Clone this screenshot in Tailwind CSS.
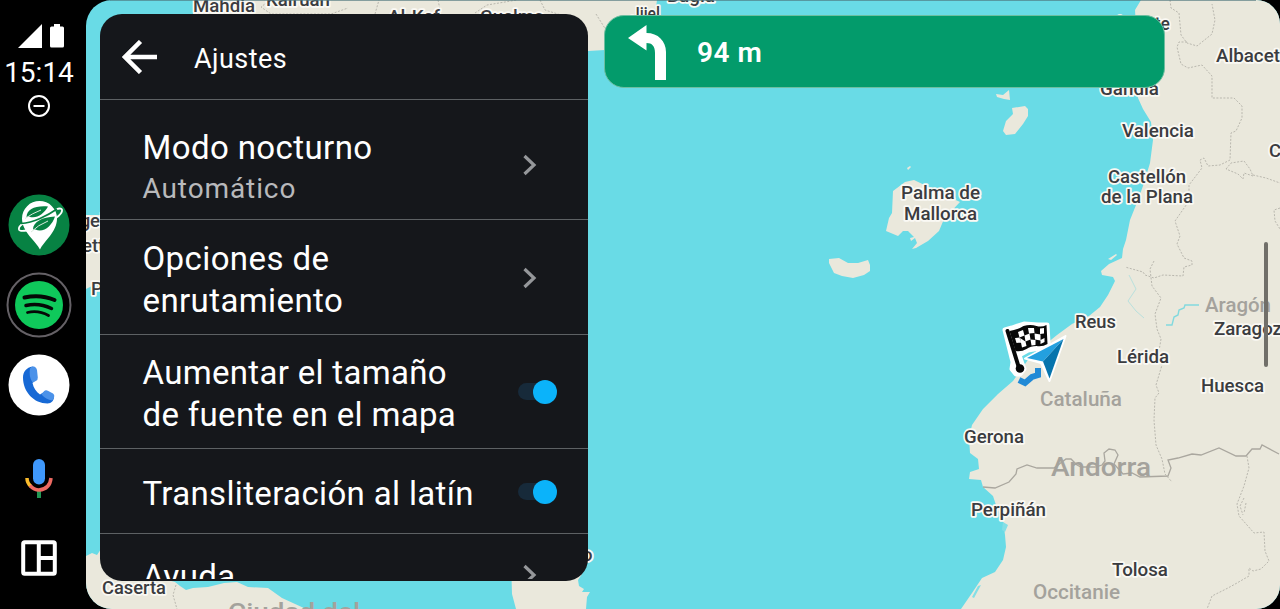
<!DOCTYPE html>
<html lang="es">
<head>
<meta charset="utf-8">
<title>Ajustes</title>
<script src="https://cdn.jsdelivr.net/npm/@tailwindcss/browser@4"></script>
</head>
<body class="bg-black">
<div class="relative flex h-[609px] w-[1280px] overflow-hidden bg-black font-['Roboto',sans-serif]">
  <!-- System rail -->
  <nav class="flex h-full w-[86px] shrink-0 flex-col items-center pr-2 text-white">
    <div class="mt-6 flex h-6 items-end gap-2 pl-1">
      <svg class="h-6 w-6" viewBox="0 0 24 24" fill="white"><path d="M24 0V24H0Z"/></svg>
      <svg class="h-6 w-[14px]" viewBox="0 0 14 24" fill="white"><path d="M4 0h6v2.500h2.500q1.500 0 1.500 1.500v18q0 1.500-1.500 1.500h-11Q0 23.500 0 22V4q0-1.500 1.500-1.500H4Z"/></svg>
    </div>
    <div class="mt-[9px] h-8 text-[28px] leading-8 whitespace-nowrap">15:14</div>
    <svg class="mt-[6px] size-[22px]" viewBox="0 0 22 22" fill="none" stroke="white" stroke-width="2"><circle cx="11" cy="11" r="10"/><path d="M5.500 11h11"/></svg>
    <svg class="mt-[77px] size-[62px]" viewBox="0 0 62 62">
      <circle cx="31" cy="31" r="30.500" fill="#078243"/>
      <path d="M32 55.500C28 47 14 38 14 24.500a17.500 17.500 0 0 1 35 0C49 38 36 47 32 55.500Z" fill="#fff"/>
      <path d="M48 15.500c4-1.700 6.500-1.200 6 1.500-.8 4-9 9.500-20 14.500S12 38.500 11 35.500c-.6-2 1-4 4-6" fill="none" stroke="#fff" stroke-width="1.800"/>
      <path d="M13 29.500Q22 29 32 24.500T49 15" fill="none" stroke="#078243" stroke-width="1.600"/>
      <path d="M18.500 23C19 15 27 11.500 40 12.500 36 20 28 25.500 21 22.500ZM25 35.500C25 28 34 23 47 22.500 44 32 35 39.500 27.500 35.500Z" fill="#078243"/>
      <path d="M17 24.500Q24 19.500 33 16M23 38Q30 31 40 27" fill="none" stroke="#d7eadc" stroke-width="1"/>
    </svg>
    <svg class="mt-4 size-[66px]" viewBox="0 0 66 66">
      <circle cx="33" cy="33" r="31.500" fill="none" stroke="#656166" stroke-width="2"/>
      <circle cx="33" cy="33" r="24" fill="#0fc95b"/>
      <g fill="none" stroke="#050806" stroke-linecap="round"><path d="M18.500 25.500q16-3.500 30 2.500" stroke-width="4"/><path d="M20 33.500q13-3 25.500 3" stroke-width="3.500"/><path d="M21.500 40.500q11-2.500 21 3" stroke-width="2.800"/></g>
    </svg>
    <svg class="mt-[16px] size-[62px]" viewBox="0 0 62 62">
      <circle cx="31" cy="31" r="30.500" fill="#fff"/>
      <path d="M24.500 12.500c-6 1-9.500 5.500-9.500 11C15 38 26 49.500 39.500 49.500c4 0 6.500-3 6.500-7l-8.500-5.500-5.500 3.500c-4-3-6.500-6.500-7.500-11.500l4.500-4-2-11.500Z" fill="#1769d5"/>
      <path d="M22 14.500q1-2 3.500-2t3.500 3.500l.8 7.500q.2 2.500-2 3.500l-3.300 1.500q-4-6-2.500-14ZM33.500 40.500l2.300-3q1.700-1.800 4-.8l5.200 2.800q1.800 1.200 1.200 3.500-.5 2-2.200 3.500-6-1-10.500-6Z" fill="#4b92e9"/>
    </svg>
    <svg class="mt-[43px] h-[40px] w-[30px]" viewBox="0 0 30 40">
      <path d="M15 31v8" stroke="#229653" stroke-width="4"/>
      <path d="M3 19q0 5 4 8.500" fill="none" stroke="#fbbc2c" stroke-width="3.500"/>
      <path d="M6 26.500Q10 31 15 31q11-1 12-12" fill="none" stroke="#ed6a62" stroke-width="3.500"/>
      <rect x="9" y="0" width="12" height="25.500" rx="6" fill="#3f98fb"/>
    </svg>
    <svg class="mt-[41px] size-9" viewBox="0 0 36 36" fill="none" stroke="#fff" stroke-width="4"><rect x="2.200" y="2.200" width="31.600" height="31.600" rx="1.500"/><path d="M17.800 2v32M18 18h16"/></svg>
  </nav>

  <!-- Map viewport -->
  <main class="relative h-full w-[1194px] overflow-hidden rounded-l-[26px] rounded-r-[24px] bg-[#69dbe6]">
    <svg class="block h-full w-full" viewBox="86 0 1194 609">
      <g fill="#eae8dc">
        <path d="M193 0H657Q655 40 605 50L588 51V100H193Z"/>
        <path d="M86 215H120V287H103L96 284 86 289Z"/>
        <path d="M86 556 92 553 97 555 101 549V540H160V578L175 582 180 586 186 590 193 588 208 587 224 583 237 582 248 587 268 588 282 598 306 609H86Z"/>
        <path d="M511 560H583L582 574 578 580 579 586 584 589 582 592 590 592 587 597 586 609H516L512 594Z"/>
        <path d="M1141 0 1135 10 1138 60 1134 80 1138 98 1143 109 1151 122 1153 140 1150 163 1143 186 1136 205 1130 220 1126 240 1123 249 1122 258 1109 264 1101 271 1102 275 1113 277 1115 281 1108 295 1100 307 1089 316 1072 324 1057 335 1030 357 1013 381 998 394 983 409 972 425 969 438 970 453 978 459 979 469 970 472 969 479 981 480 983 487 993 496 997 508 1003 520 1005 535 1006 547 1003 560 995 572 982 578 972 593 961 609H1280V0Z"/>
        <path d="M996 94 1003 95 1009 90 1010 100 1004 99 997 97ZM1012 108 1025 106 1028 109 1028 116 1023 124 1015 134 1006 135 1003 131 1006 121 1013 114Z"/>
        <path d="M893 191 905 182 914 180 960 202 944 219 939 231 928 241 916 248 912 249 917 243 915 238 911 241 910 238 914 237 908 231 903 231 898 236 886 231 889 218 892 213Z"/>
        <path d="M829 259 839 258 848 263 858 263 868 260 870 265 870 271 864 275 853 278 842 276 834 273 829 263ZM907 168l3-2 1 1-3 3ZM1108 259l8-5 1 1-6 5ZM982 593l-8 10 1-9 6-9Z"/>
      </g>
      <path d="M1003 522l5 3-3 7-3-2ZM981 585l-7 13-2-1 6-11Z" fill="#83dfe6"/>
      <!-- Rivers -->
      <path d="M1166 325h6l2-8 4-2 1-5 5-2 1-3h14" fill="none" stroke="#82d9de" stroke-width="1.400"/>
      <path d="M1129 275l7 14-8 12 8 10 8 7" fill="none" stroke="#b9e0dc" stroke-width="1"/>
      <!-- Region borders -->
      <g fill="none" stroke="#b9b7ae" stroke-width="1" stroke-dasharray="2 1.500">
        <path d="M1170 0l1 8 8 5 2 22 6 8 10 3 15-12 3-14-3-16"/>
        <path d="M1187 42l-8 0-2 5 4 17 7 4 14-3 10 11 0 22h22l8 8v12l-6 13-5 2-1 27-10 5-12 1-4-8-4 2 2 8-13 17v16l-14 20 5 15-3 8 7 14 8 3v4l-8 2-1 9-20-1-9 3-9-3-2-3-18-5"/>
        <path d="M1154 261l-4 8 2 17 9 12-6 16 2 15 4 10-2 12 3 14-6 20 3 8-4 5-1 22 2 25 6 14 3 15 7 8"/>
        <path d="M1226 169l5-6 13-2 6 8 3 7-9-3-1 6-5-5-12-5M1253 175l13 3 14 5M1280 208l-6 2 1 11 5 8M1247 456l2 12-5 18-7 18 2 12 8 9 7 8 10-1 1 19 4 10-8 8-8 2-4-3v8l-12 7-9 5-16 8-5 13"/>
        <path d="M270 0l-9 7 10 7h60l17-6M375 14l4-14M438 0l3 14M475 13l12-8 30-5M540 0l5 10 16 5M596 14l10 16M176 585l-3 10 4 14"/>
        <path d="M1244 498l-4 8 3 9M1246 503l-2 10"/>
      </g>
      <path d="M983 487l12 1 14-6 7-8 1-5 10-4 10 3h17l12-9 5 0 6 6 4 2h14l7-2 3-4-1-8 5-4 6 1 3 5-4 9 9 10 9-1 8 4 28-1 3-8-3-8 10-2 14-4 9 1 18-7 17 8 10 0 6-7 8 0 2-4 17 9" fill="none" stroke="#aaa79f" stroke-width="1.300"/>
      <!-- Route and destination -->
      <path d="M1019 380l6 3 7-6 6-2 0-7" fill="none" stroke="#218ad6" stroke-width="6"/>
      <g stroke-linejoin="round">
        <path d="M1005 330l7-2 12-4 14 1 9 0 1 18-9 5-11 2-9 5 3 9 2 5-4 5h-4l-4-5 1-7Z" fill="#fff" stroke="#fff" stroke-width="5"/>
        <path d="M1007.500 331 1019 368" stroke="#080808" stroke-width="4" stroke-linecap="round"/><circle cx="1020" cy="368.500" r="4.300" fill="#080808"/>
        <path d="M1009.500 331q8-1 14-5 7-2 13 0 5 1.500 10-1l1 19q-5 3-11 2-6 0-10 3-5 3-11 2Z" fill="#080808"/>
        <g fill="#fff"><path d="M1018 332l5-2 1.500 5.500-5 2ZM1028 328l6 0 .5 5-5.500.5ZM1024.500 335.500l5-2 1 6-5 2ZM1034.500 333.500l6 1v6l-5.500-1ZM1020 338l5.500 3.500 1 4.500-4.500 1.500ZM1030.500 339.500l5 .5v5l-4 .5ZM1040 328.500l4-.5v5.500l-4 .5ZM1040.500 340l4-2v4l-4 2ZM1015 338l4.500-.5 1.500 5-4.500.5Z"/></g>
      </g>
      <path d="M1065.500 336 1025 358.500 1041 363 1049.500 381Z" fill="#fff" stroke="#fff" stroke-width="2" stroke-linejoin="round"/>
      <path d="M1063.500 339 1027 358 1043 361.500Z" fill="#23a0df"/><path d="M1063.500 339 1043 361.500 1049.500 378.500Z" fill="#0674ad"/>
      <!-- Place names -->
      <g class="font-medium" font-size="18.500" fill="#3b3c40" stroke="#faf9f4" stroke-width="3.600" stroke-linejoin="round" paint-order="stroke">
        <text x="193" y="12" textLength="62" lengthAdjust="spacingAndGlyphs">Mahdia</text><text x="266" y="6" textLength="64" lengthAdjust="spacingAndGlyphs">Kairuán</text><text x="388" y="23" textLength="52" lengthAdjust="spacingAndGlyphs">Al-Kef</text><text x="480" y="23" textLength="64" lengthAdjust="spacingAndGlyphs">Guelma</text><text x="631" y="20" textLength="29" lengthAdjust="spacingAndGlyphs">Jijel</text><text x="667" y="2" textLength="48" lengthAdjust="spacingAndGlyphs">Bugía</text>
        <text x="1106" y="30" textLength="64" lengthAdjust="spacingAndGlyphs">Alicante</text><text x="1100" y="95" textLength="59" lengthAdjust="spacingAndGlyphs">Gandía</text><text x="1216" y="62" textLength="74" lengthAdjust="spacingAndGlyphs">Albacete</text><text x="1122" y="137" textLength="72" lengthAdjust="spacingAndGlyphs">Valencia</text><text x="1269" y="157">Cuenca</text>
        <text x="1108" y="183" textLength="78" lengthAdjust="spacingAndGlyphs">Castellón</text><text x="1101" y="203" textLength="92" lengthAdjust="spacingAndGlyphs">de la Plana</text><text x="901" y="199" textLength="79" lengthAdjust="spacingAndGlyphs">Palma de</text><text x="904" y="219.500" textLength="73" lengthAdjust="spacingAndGlyphs">Mallorca</text>
        <text x="1075" y="328" textLength="41" lengthAdjust="spacingAndGlyphs">Reus</text><text x="1214" y="335" textLength="78" lengthAdjust="spacingAndGlyphs">Zaragoza</text><text x="1117" y="363" textLength="52" lengthAdjust="spacingAndGlyphs">Lérida</text><text x="1201" y="392" textLength="63" lengthAdjust="spacingAndGlyphs">Huesca</text><text x="964" y="443" textLength="60" lengthAdjust="spacingAndGlyphs">Gerona</text><text x="971" y="515.500" textLength="75" lengthAdjust="spacingAndGlyphs">Perpiñán</text><text x="1112" y="575.500" textLength="56" lengthAdjust="spacingAndGlyphs">Tolosa</text>
        <text x="102" y="594" textLength="64" lengthAdjust="spacingAndGlyphs">Caserta</text><text x="61" y="227">Argel</text><text x="82" y="252">etta</text><text x="91" y="295">P</text><text x="582" y="561">o</text>
      </g>
      <g class="font-medium" font-size="20" fill="#a4a29c">
        <text x="1205" y="312" textLength="66" lengthAdjust="spacingAndGlyphs">Aragón</text><text x="1040" y="406" textLength="82" lengthAdjust="spacingAndGlyphs">Cataluña</text><text x="1033" y="599" textLength="87" lengthAdjust="spacingAndGlyphs">Occitanie</text><text x="1051" y="475.500" textLength="100" lengthAdjust="spacingAndGlyphs" font-size="26">Andorra</text><text x="228" y="620" textLength="132" lengthAdjust="spacingAndGlyphs" font-size="24">Ciudad del</text>
      </g>
      <path d="M110 .5H1256" stroke="#4f777d" stroke-opacity=".65"/>
    </svg>
    <div class="absolute top-[242px] left-[1178px] h-[125px] w-1 rounded-full bg-[#716f69]"></div>

    <!-- Settings panel -->
    <section class="absolute top-[14px] left-[14px] flex h-[567px] w-[488px] flex-col overflow-hidden rounded-[22px] bg-[#15171b] text-white">
      <header class="flex h-[86px] shrink-0 items-center border-b-[1.500px] border-[#5d6164] pl-[22px]">
        <svg class="h-[34px] w-[36px]" viewBox="0 0 36 34" fill="none" stroke="#fff" stroke-width="4.500"><path d="M18.500 1.500 3 17 18.500 32.500M3 17H35"/></svg>
        <h1 class="ml-9 pt-1 text-[27px] leading-8 tracking-[0.450px]">Ajustes</h1>
      </header>
      <div class="flex h-[120px] shrink-0 items-center justify-between border-b-[1.500px] border-[#5d6164] pr-[51px] pl-[42.500px]">
        <div class="pt-4"><p class="text-[33px] leading-[42px] tracking-[0.400px]">Modo nocturno</p><p class="text-[28px] leading-10 tracking-[0.900px] text-[#b8b9bb]">Automático</p></div>
        <svg class="mt-[10px] h-[22px] w-[14px]" viewBox="0 0 14 22" fill="none" stroke="#95979a" stroke-width="3.200"><path d="M1.500 2 11 11 1.500 20"/></svg>
      </div>
      <div class="flex h-[115px] shrink-0 items-center justify-between border-b-[1.500px] border-[#5d6164] pr-[51px] pl-[42.500px]">
        <p class="pt-[5px] text-[33px] leading-[42px] tracking-[0.400px]">Opciones de<br>enrutamiento</p>
        <svg class="mt-[2px] h-[22px] w-[14px]" viewBox="0 0 14 22" fill="none" stroke="#95979a" stroke-width="3.200"><path d="M1.500 2 11 11 1.500 20"/></svg>
      </div>
      <div class="flex h-[114px] shrink-0 items-center justify-between border-b-[1.500px] border-[#5d6164] pr-[31px] pl-[42.500px]">
        <p class="pt-1 text-[33px] leading-[42px] tracking-[0.320px] whitespace-nowrap">Aumentar el tamaño<br>de fuente en el mapa</p>
        <div class="flex w-[39px] items-center"><span class="h-[17px] w-[30px] shrink-0 rounded-full bg-[#172a3a]"></span><span class="-ml-[15px] size-6 shrink-0 rounded-full bg-[#0bb3fa]"></span></div>
      </div>
      <div class="flex h-[85px] shrink-0 items-center justify-between border-b-[1.500px] border-[#5d6164] pr-[31px] pl-[42.500px]">
        <p class="pt-[5px] text-[33px] leading-[42px] tracking-[0.350px] whitespace-nowrap">Transliteración al latín</p>
        <div class="mt-px flex w-[39px] items-center"><span class="h-[17px] w-[30px] shrink-0 rounded-full bg-[#172a3a]"></span><span class="-ml-[15px] size-6 shrink-0 rounded-full bg-[#0bb3fa]"></span></div>
      </div>
      <div class="mb-[2px] flex min-h-0 flex-1 items-start justify-between overflow-hidden pr-[51px] pl-[42.500px]">
        <p class="mt-[22px] text-[33px] leading-[42px] tracking-[0.400px]">Ayuda</p>
        <svg class="mt-[30px] h-[22px] w-[14px] shrink-0" viewBox="0 0 14 22" fill="none" stroke="#95979a" stroke-width="3.200"><path d="M1.500 2 11 11 1.500 20"/></svg>
      </div>
    </section>

    <!-- Turn instruction -->
    <section class="absolute top-[15px] left-[518px] flex h-[73px] w-[561px] items-center rounded-[20px] border border-[#6dbea0] bg-[#039b6b] text-white">
      <svg class="ml-[23px] h-[56px] w-[40px]" viewBox="0 0 40 56"><path d="M0 14 18.500 1v8C30 9 38 17 38 28v28H27V29c0-7-3-10-8.500-10v7.500Z" fill="#fff"/></svg>
      <strong class="ml-[29px] pt-[3px] text-[28px] font-semibold tracking-[0.500px]">94 m</strong>
    </section>
  </main>
</div>
</body>
</html>
